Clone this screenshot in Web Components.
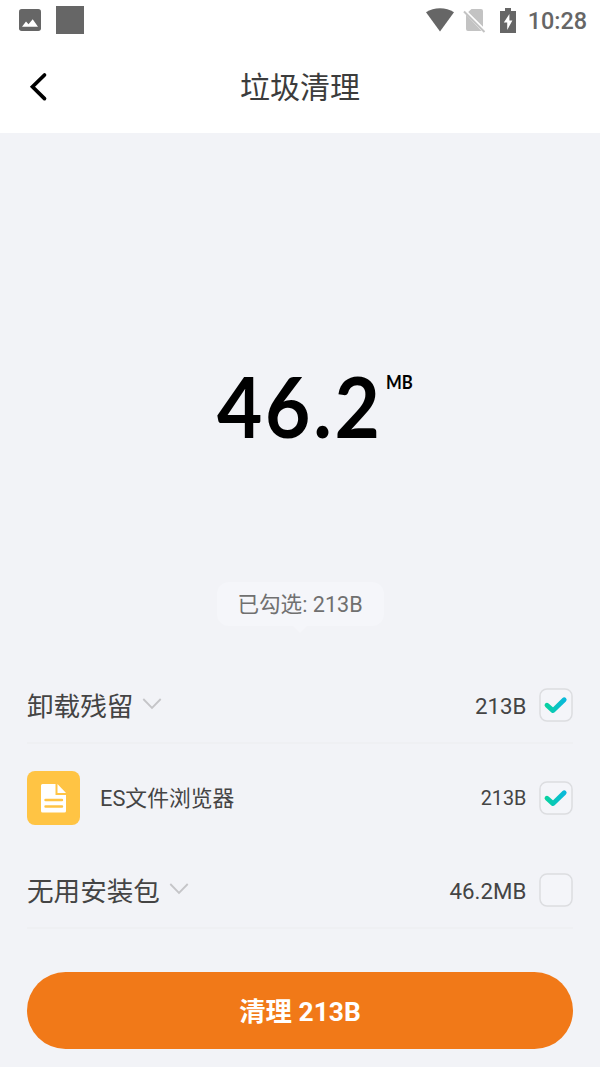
<!DOCTYPE html>
<html lang="zh-CN">
<head>
<meta charset="utf-8">
<title>垃圾清理</title>
<style>
html,body{margin:0;background:#f2f3f7}
body{font-family:Roboto,"Noto Sans CJK SC",sans-serif;color:#444}
</style>
</head>
<body>
<cleaner-app></cleaner-app>
<script>
const define = (name, html, setup) => {
  const template = document.createElement('template');
  template.innerHTML = html;
  customElements.define(name, class extends HTMLElement {
    connectedCallback() {
      if (this.shadowRoot) return;
      this.attachShadow({mode: 'open'}).append(template.content.cloneNode(true));
      if (setup) setup(this, this.shadowRoot);
    }
  });
};

define('status-bar', `<style>
:host{display:flex;height:40px;align-items:center;justify-content:space-between;padding:0 13px 0 19px;background:#fff;box-sizing:border-box}
.group{display:flex;align-items:center}
svg{display:block}
.square{width:28px;height:28px;background:#666;margin-left:15px}
.time{font-weight:500;font-size:23.4px;line-height:28px;color:#666;margin:2px 0 0 12px}
</style>
<div class="group">
<svg width="22" height="22" viewBox="0 0 22 22"><rect width="22" height="22" rx="2.7" fill="#666"/><path d="M3 17.8 7 12.4 9.5 15.2 13.7 10.3 19 17.8Z" fill="#fff"/></svg>
<div class="square"></div></div>
<div class="group">
<svg width="30" height="24" viewBox="0 0 30 24"><path d="M1 4.2C9-1 21-1 29 4.2L15 23.5Z" fill="#666"/></svg>
<svg width="24" height="26" viewBox="0 0 24 26" style="margin-left:8px"><path d="M8.5 2H18Q20 2 20 4V19.8L5.2 5ZM3 7.5 18.5 24H5Q3 24 3 22Z" fill="#c3c3c3"/><path d="M1 4.5 21.5 25" stroke="#c3c3c3" stroke-width="2"/></svg>
<svg width="16" height="25" viewBox="0 0 16 25" style="margin-left:13px"><path d="M5 0H11V3H16V25H0V3H5Z" fill="#666"/><path d="M9.4 6 3.8 14.6H7.2V22L12.4 12.5H9.4Z" fill="#fff"/></svg>
<span class="time"><slot></slot></span></div>`);

define('title-bar', `<style>
:host{display:grid;grid-template-columns:77px 1fr 77px;align-items:center;height:93px;background:#fff}
svg{display:block;margin-left:29px}
.title{text-align:center;font-size:30px;line-height:44px;padding-top:3px;color:#3c3c3c}
</style>
<svg width="19" height="30" viewBox="0 0 19 30"><path d="M15.5 3 3.5 14.8 15.5 26.6" fill="none" stroke="#000" stroke-width="3.7" stroke-linecap="round" stroke-linejoin="miter"/></svg>
<div class="title"><slot></slot></div>`);

define('junk-total', `<style>
:host{display:flex;height:449px;align-items:flex-start;padding:222px 0 0 217px;box-sizing:border-box;color:#000;font-family:Lato,sans-serif}
.value{width:169px;font-size:85px;line-height:100px;font-weight:700;letter-spacing:3px;transform:scaleX(.92);transform-origin:left}
.unit{font-size:19px;line-height:22px;font-weight:700;margin:16px 0 0;transform:scaleX(.88);transform-origin:left}
</style><span class="value"><slot></slot></span><span class="unit"><slot name="unit"></slot></span>`);

define('selected-pill', `<style>
:host{display:flex;flex-direction:column;align-items:center;height:85px}
.pill{width:167px;height:44px;border-radius:12px;background:#f5f6fa;text-align:center;font-size:21.6px;line-height:46px;color:#707070;white-space:nowrap}
svg{display:block}
</style><div class="pill"><slot></slot></div><svg width="14" height="7"><path d="M0 0H14L7 7Z" fill="#f5f6fa"/></svg>`);

define('check-box', `<style>
:host{display:block;width:34px;height:34px}
svg{display:block}
:host(:not([checked])) .tick{display:none}
</style><svg width="34" height="34" viewBox="0 0 34 34"><defs><linearGradient id="g" x1="7" y1="0" x2="27" y2="0" gradientUnits="userSpaceOnUse"><stop offset="0" stop-color="#08d2a0"/><stop offset="1" stop-color="#09b7df"/></linearGradient></defs><rect x="1" y="1" width="32" height="32" rx="7" fill="#f4f5f9" stroke="#dcdde0" stroke-width="1.5"/><path class="tick" d="M8 17.2 14 22.6 25.2 11.7" fill="none" stroke="url(#g)" stroke-width="4.8" stroke-linecap="round" stroke-linejoin="round"/></svg>`);

define('junk-group', `<style>
:host{display:flex;align-items:center;height:77px;box-sizing:border-box;border-bottom:2px solid #eff0f3;font-size:26.6px;line-height:38px}
.name{padding-top:4px}
svg{display:block;margin:-2px 0 0 9px}
.size{margin-left:auto;margin-right:13px;padding-top:2px;font-size:22.3px}
</style><span class="name"><slot></slot></span><svg width="20" height="13" viewBox="0 0 20 13"><path d="M1.3 2 10 11 18.7 2" fill="none" stroke="#c5c5c8" stroke-width="1.8"/></svg><span class="size"></span><check-box></check-box>`,
(host, root) => {
  root.querySelector('.size').textContent = host.getAttribute('size');
  root.querySelector('check-box').toggleAttribute('checked', host.hasAttribute('checked'));
});

define('junk-item', `<style>
:host{display:flex;align-items:center;height:108px;font-size:21.8px;line-height:32px}
.name{padding-top:2px}
svg{display:block;margin-right:20px}
.size{margin-left:auto;margin-right:13px;padding-top:2px;font-size:19.8px}
</style><svg width="53" height="54" viewBox="0 0 53 54"><rect width="53" height="54" rx="8" fill="#ffc444"/><path d="M15.5 13H28.5V24H39V40Q39 41.5 37.5 41.5H15.5Q14 41.5 14 40V14.5Q14 13 15.5 13Z" fill="#fff"/><path d="M30.5 13 39 22H30.5Z" fill="#fff"/><path d="M18.5 29H35M18.5 35.5H35" stroke="#ffc444" stroke-width="2.4" stroke-linecap="round"/></svg><span class="name"><slot></slot></span><span class="size"></span><check-box checked></check-box>`,
(host, root) => { root.querySelector('.size').textContent = host.getAttribute('size'); });

define('clean-button', `<style>
:host{display:block;margin:43px 27px 0}
button{display:block;width:100%;height:77px;border:0;border-radius:39px;background:#f17918;color:#fff;font:700 26.4px/78px Roboto,"Noto Sans CJK SC",sans-serif;padding:1px 0 0}
</style><button><slot></slot></button>`);

define('cleaner-app', `<style>
:host{display:block;height:1067px;overflow:hidden;background:#f2f3f7}
.list{padding:0 26.6px 0 27px}
</style>
<status-bar>10:28</status-bar>
<title-bar>垃圾清理</title-bar>
<junk-total>46.2<span slot="unit">MB</span></junk-total>
<selected-pill>已勾选: 213B</selected-pill>
<div class="list">
<junk-group size="213B" checked>卸载残留</junk-group>
<junk-item size="213B">ES文件浏览器</junk-item>
<junk-group size="46.2MB">无用安装包</junk-group>
</div>
<clean-button>清理 213B</clean-button>`);
</script>
</body>
</html>
